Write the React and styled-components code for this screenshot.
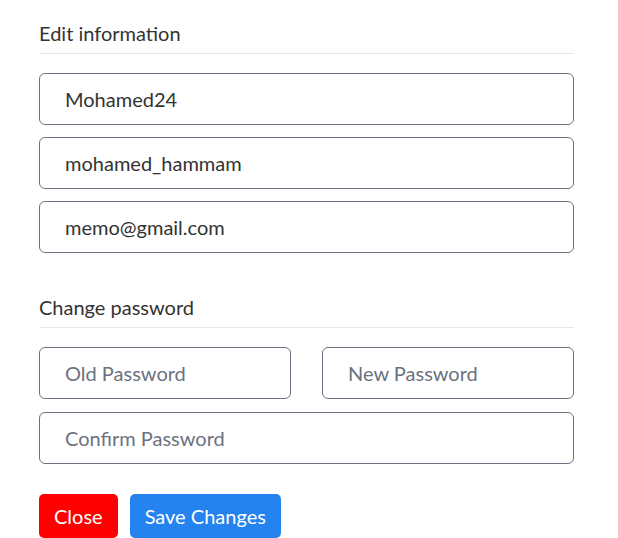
import React from "react";
import styled, { createGlobalStyle } from "styled-components";

const GlobalStyle = createGlobalStyle`
  body {
    margin: 0;
    background: #fff;
    font-family: Lato, "Open Sans", sans-serif;
    color: #333;
  }
  * { box-sizing: border-box; }
`;

const Page = styled.div`
  width: 535px;
  margin-left: 39px;
  padding-top: 20px;
`;

const Section = styled.section`
  margin-bottom: ${(p) => p.$gap || 0}px;
`;

const Heading = styled.h3`
  margin: 0;
  font-size: 20px;
  font-weight: 400;
  line-height: 26px;
  padding-bottom: 7px;
  border-bottom: 1px solid #e5e7eb;
  margin-bottom: 19px;
`;

const Fields = styled.div`
  display: grid;
  grid-template-columns: ${(p) => (p.$cols === 2 ? "1fr 1fr" : "1fr")};
  column-gap: 31px;
  row-gap: 12px;
  margin-bottom: 13px;
`;

const Input = styled.input`
  display: block;
  width: 100%;
  height: 52px;
  border: 1px solid #6b7280;
  border-radius: 6px;
  padding: 0 25px;
  font-family: Lato, "Open Sans", sans-serif;
  font-size: 20px;
  color: #333;
  background: #fff;
  outline: none;

  &::placeholder {
    color: #6b7280;
  }
`;

const Actions = styled.div`
  display: flex;
  gap: 12px;
  margin-top: 30px;
`;

const Button = styled.button`
  height: 44px;
  padding: 0 15px;
  border: none;
  border-radius: 5px;
  font-family: Lato, "Open Sans", sans-serif;
  font-size: 20px;
  color: #fff;
  background: ${(p) => (p.$variant === "danger" ? "#ff0000" : "#2583f0")};
  cursor: pointer;
`;

export default function App() {
  return (
    <>
      <GlobalStyle />
      <Page>
        <Section $gap={41}>
          <Heading>Edit information</Heading>
          <Fields>
            <Input defaultValue="Mohamed24" />
            <Input defaultValue="mohamed_hammam" />
            <Input defaultValue="memo@gmail.com" />
          </Fields>
        </Section>
        <Section>
          <Heading>Change password</Heading>
          <Fields $cols={2}>
            <Input type="password" placeholder="Old Password" />
            <Input type="password" placeholder="New Password" />
          </Fields>
          <Fields>
            <Input type="password" placeholder="Confirm Password" />
          </Fields>
        </Section>
        <Actions>
          <Button $variant="danger">Close</Button>
          <Button>Save Changes</Button>
        </Actions>
      </Page>
    </>
  );
}
